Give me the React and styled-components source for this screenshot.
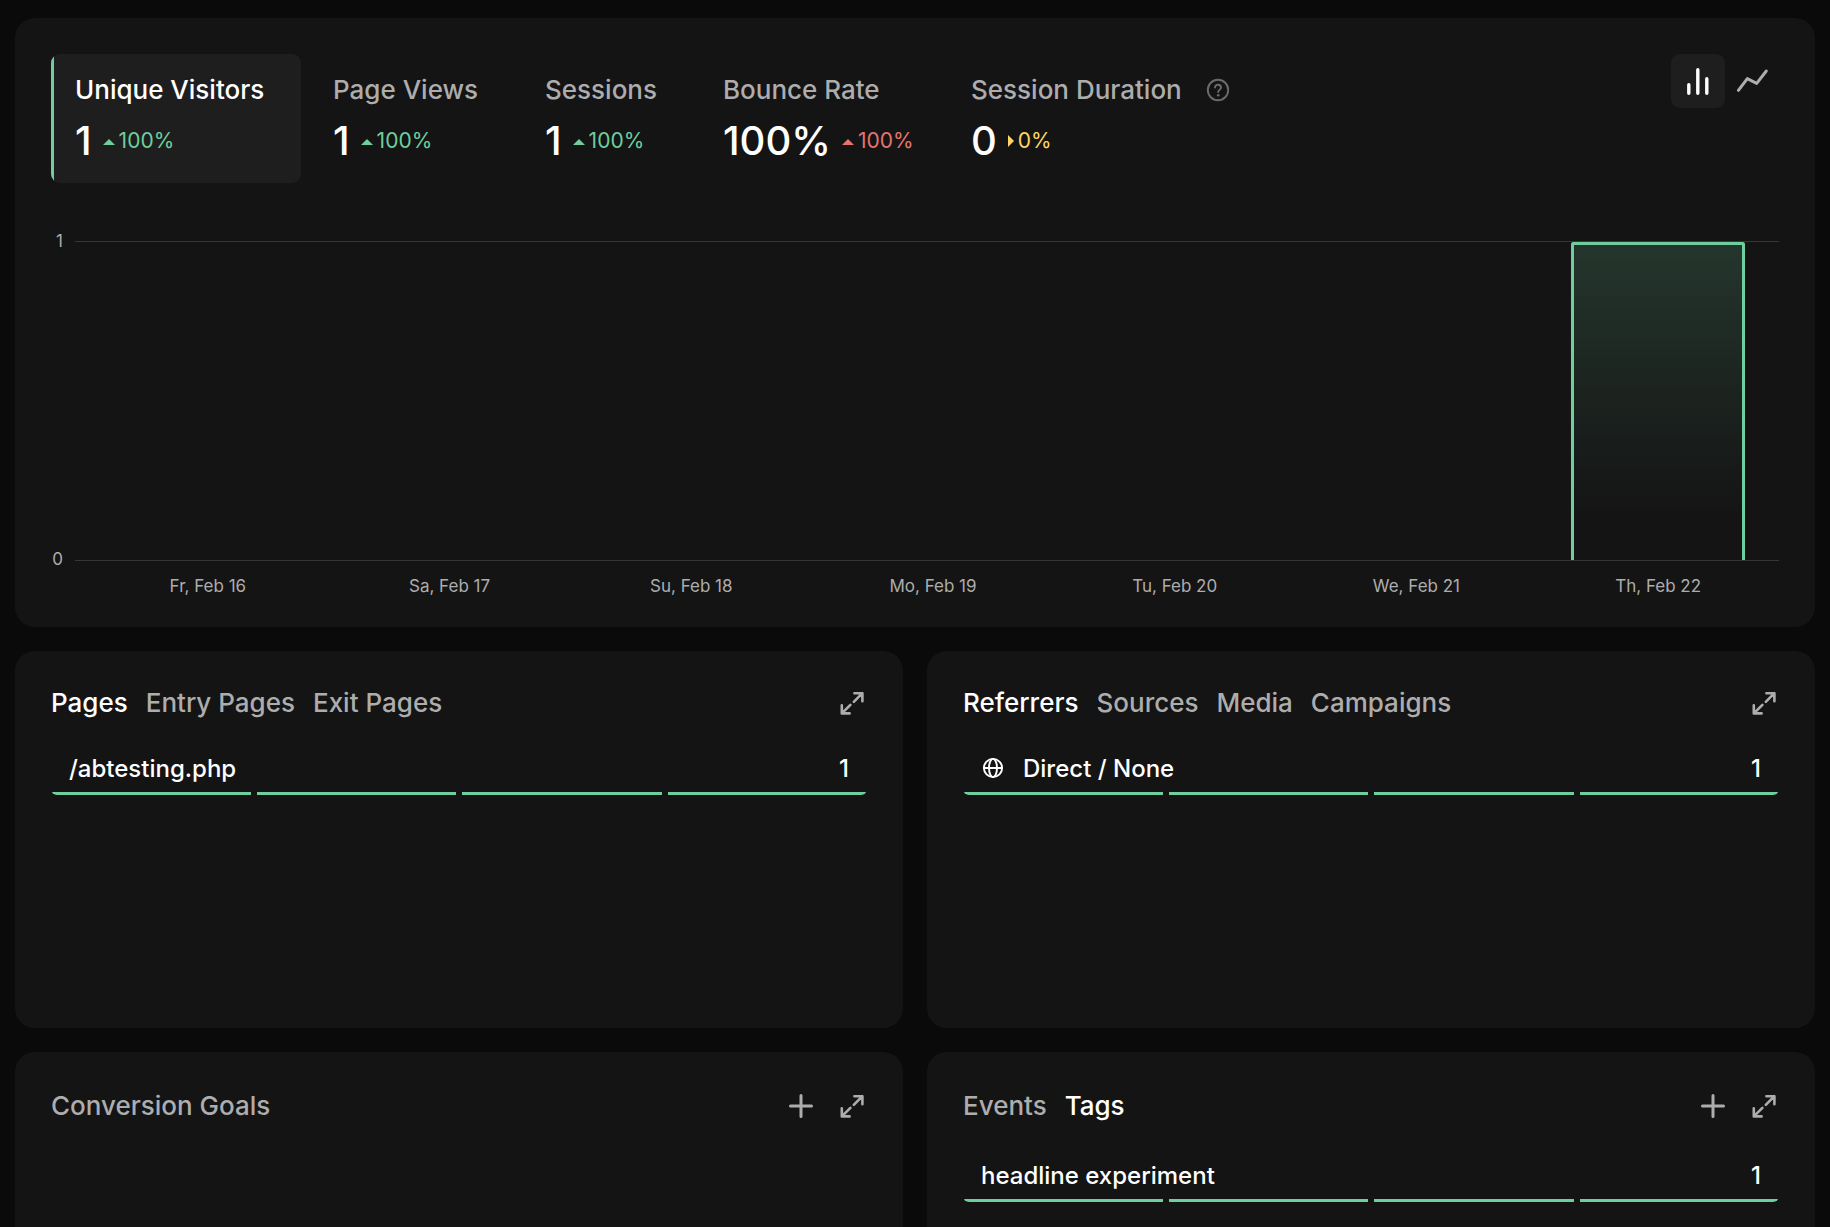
import React, { useState } from "react";
import styled, { createGlobalStyle } from "styled-components";

const color = {
  page: "#0a0a0a",
  card: "#141414",
  raised: "#1e1e1e",
  text: "#ffffff",
  muted: "#adadad",
  faint: "#6b6b6b",
  line: "#363636",
  green: "#6ece9d",
  red: "#e67370",
  yellow: "#ffd665",
};

const GlobalStyle = createGlobalStyle`
  *, *::before, *::after { box-sizing: border-box; }
  body {
    margin: 0;
    background: ${color.page};
    color: ${color.text};
    font-family: Inter, "Liberation Sans", sans-serif;
  }
  button {
    margin: 0;
    padding: 0;
    border: 0;
    background: none;
    color: inherit;
    font: inherit;
    text-align: left;
    cursor: pointer;
  }
  ul { margin: 0; padding: 0; list-style: none; }
`;

const Page = styled.main`
  display: flex;
  flex-direction: column;
  gap: 24px;
  height: 100vh;
  padding: 18px 15px;
  overflow-y: auto;
  scrollbar-width: none;
`;

const Card = styled.section`
  flex: none;
  padding: 36px 36px 27px;
  border-radius: 20px;
  background: ${color.card};
`;

const SummaryHeader = styled.header`
  display: flex;
  justify-content: space-between;
  align-items: flex-start;
`;

const Metrics = styled.div`
  display: flex;
  gap: 8px;
`;

const MetricTab = styled.button`
  display: flex;
  flex-direction: column;
  gap: 9px;
  min-width: ${(p) => p.$min}px;
  padding: 18px 24px;
  border-radius: 9px;
  background: ${(p) =>
    p.$active ? `linear-gradient(90deg, ${color.green} 3px, ${color.raised} 3px)` : "transparent"};
  color: ${(p) => (p.$active ? color.text : color.muted)};
`;

const MetricLabel = styled.span`
  display: flex;
  align-items: center;
  gap: 24px;
  font-size: 26px;
  font-weight: 500;
  line-height: 36px;
  white-space: nowrap;
`;

const MetricFigures = styled.span`
  display: flex;
  align-items: center;
  gap: 11px;
  line-height: 48px;
`;

const MetricValue = styled.span`
  color: ${color.text};
  font-size: 40px;
  font-weight: 500;
`;

const Change = styled.span`
  display: flex;
  align-items: center;
  gap: 4px;
  color: ${(p) => color[p.$tone]};
  font-size: 21px;
`;

const ChartTypes = styled.div`
  display: flex;
`;

const ChartTypeButton = styled.button`
  display: grid;
  place-items: center;
  width: 54px;
  height: 54px;
  border-radius: 9px;
  background: ${(p) => (p.$active ? color.raised : "transparent")};
  color: ${(p) => (p.$active ? color.text : color.muted)};
`;

const Chart = styled.div`
  display: grid;
  grid-template-columns: 12px minmax(0, 1fr);
  column-gap: 12px;
  margin-top: 58px;
  color: ${color.muted};
  font-size: 17px;
`;

const YAxis = styled.div`
  display: flex;
  flex-direction: column;
  justify-content: space-between;
  margin: -13px 0 -12px;
  line-height: 27px;
  text-align: right;
`;

const Columns = styled.div`
  display: grid;
  grid-template-columns: repeat(7, minmax(0, 1fr));
  padding-left: 12px;
`;

const Plot = styled(Columns)`
  height: 320px;
  border-top: 1px solid ${color.line};
  border-bottom: 1px solid ${color.line};
`;

const Slot = styled.div`
  display: flex;
  justify-content: center;
  align-items: flex-end;
`;

const Bar = styled.div`
  width: 72%;
  border: 3px solid ${color.green};
  border-bottom: 0;
  border-radius: 3px 3px 0 0;
  background: linear-gradient(rgba(110, 206, 157, 0.18), rgba(110, 206, 157, 0) 86%);
`;

const XAxis = styled(Columns)`
  grid-column: 2;
  padding-top: 12px;
  line-height: 27px;
  text-align: center;
`;

const PanelGrid = styled.div`
  display: grid;
  grid-template-columns: repeat(2, minmax(0, 1fr));
  gap: 24px;
`;

const Panel = styled(Card)`
  min-height: 377px;
`;

const PanelHeader = styled.header`
  display: flex;
  align-items: center;
  justify-content: space-between;
  height: ${(p) => (p.$tall ? 36 : 32)}px;
  margin-bottom: ${(p) => (p.$tall ? 27 : 25)}px;
`;

const Tabs = styled.div`
  display: flex;
  gap: 18px;
`;

const Tab = styled.button`
  color: ${(p) => (p.$active ? color.text : color.muted)};
  font-size: 26px;
  font-weight: 500;
  line-height: 32px;
  white-space: nowrap;
`;

const Actions = styled.div`
  display: flex;
  gap: 21px;
`;

const IconButton = styled.button`
  display: grid;
  place-items: center;
  width: 30px;
  height: 30px;
  color: ${color.muted};
`;

const Row = styled.li`
  overflow: hidden;
  border-radius: 6px;
`;

const RowContent = styled.div`
  display: flex;
  align-items: center;
  gap: 18px;
  height: 48px;
  padding: 0 18px;
  font-size: 24px;
  font-weight: 500;
`;

const RowValue = styled.span`
  margin-left: auto;
`;

const Track = styled.div`
  display: grid;
  grid-template-columns: repeat(4, minmax(0, 1fr));
  gap: 6px;
  height: 3px;
`;

const Segment = styled.span`
  background: ${color.green};
`;

const Icon = styled.svg.attrs({ fill: "none", stroke: "currentColor", "aria-hidden": true })`
  display: block;
  flex: none;
  stroke-linecap: round;
  stroke-linejoin: round;
`;

const UpCaret = () => (
  <Icon width="12" height="12" viewBox="0 0 12 12">
    <path d="M0 10L6 4L12 10Z" fill="currentColor" stroke="none" />
  </Icon>
);

const RightCaret = () => (
  <Icon width="6" height="12" viewBox="0 0 6 12">
    <path d="M0 0L6 6L0 12Z" fill="currentColor" stroke="none" />
  </Icon>
);

const HelpShape = styled(Icon)`
  color: ${color.faint};
`;

const HelpIcon = () => (
  <HelpShape width="24" height="24" viewBox="0 0 24 24" strokeWidth="1.9">
    <circle cx="12" cy="12" r="10.2" />
    <path d="M9 9.6C9 7.9 10.3 6.7 12 6.7S15 7.8 15 9.4C15 11.6 12.2 11.7 12.2 14.1" />
    <circle cx="12.2" cy="17.2" r="1.3" fill="currentColor" stroke="none" />
  </HelpShape>
);

const BarsIcon = () => (
  <Icon width="36" height="36" viewBox="0 0 36 36" strokeWidth="3.4">
    <path d="M8.8 21.7V30.2M17.8 6.7V30.2M26.8 15.7V30.2" />
  </Icon>
);

const LineIcon = () => (
  <Icon width="36" height="36" viewBox="0 0 36 36" strokeWidth="3">
    <path d="M4.4 27.3L13.3 15.6L22.7 20.4L32.3 8" />
  </Icon>
);

const ExpandIcon = () => (
  <Icon width="30" height="30" viewBox="0 0 30 30" strokeWidth="2.6">
    <path d="M17.4 5.2H25.4V13.2M25.4 5.2L16.8 13.8M12.6 25.4H4.8V17.4M4.8 25.4L13.4 16.8" />
  </Icon>
);

const PlusIcon = () => (
  <Icon width="30" height="30" viewBox="0 0 30 30" strokeWidth="3">
    <path d="M15 4.5V25.5M4.5 15H25.5" />
  </Icon>
);

const GlobeIcon = () => (
  <Icon width="24" height="24" viewBox="0 0 24 24" strokeWidth="1.9">
    <circle cx="12" cy="12" r="9.1" />
    <ellipse cx="12" cy="12" rx="4" ry="9.1" />
    <path d="M3 12H21" />
  </Icon>
);

const metrics = [
  { label: "Unique Visitors", value: "1", change: "100%", tone: "green", min: 250 },
  { label: "Page Views", value: "1", change: "100%", tone: "green", min: 204 },
  { label: "Sessions", value: "1", change: "100%", tone: "green", min: 170 },
  { label: "Bounce Rate", value: "100%", change: "100%", tone: "red", min: 240 },
  { label: "Session Duration", value: "0", change: "0%", tone: "yellow", min: 250, help: true },
];

const days = [
  { label: "Fr, Feb 16", visitors: 0 },
  { label: "Sa, Feb 17", visitors: 0 },
  { label: "Su, Feb 18", visitors: 0 },
  { label: "Mo, Feb 19", visitors: 0 },
  { label: "Tu, Feb 20", visitors: 0 },
  { label: "We, Feb 21", visitors: 0 },
  { label: "Th, Feb 22", visitors: 1 },
];

function Summary() {
  const [metric, setMetric] = useState(0);
  const [type, setType] = useState("bars");
  return (
    <Card>
      <SummaryHeader>
        <Metrics>
          {metrics.map((m, i) => (
            <MetricTab
              key={m.label}
              type="button"
              $active={i === metric}
              $min={m.min}
              aria-pressed={i === metric}
              onClick={() => setMetric(i)}
            >
              <MetricLabel>
                {m.label}
                {m.help && <HelpIcon />}
              </MetricLabel>
              <MetricFigures>
                <MetricValue>{m.value}</MetricValue>
                <Change $tone={m.tone}>
                  {m.tone === "yellow" ? <RightCaret /> : <UpCaret />}
                  {m.change}
                </Change>
              </MetricFigures>
            </MetricTab>
          ))}
        </Metrics>
        <ChartTypes>
          <ChartTypeButton type="button" aria-label="Bar chart" $active={type === "bars"} onClick={() => setType("bars")}>
            <BarsIcon />
          </ChartTypeButton>
          <ChartTypeButton type="button" aria-label="Line chart" $active={type === "line"} onClick={() => setType("line")}>
            <LineIcon />
          </ChartTypeButton>
        </ChartTypes>
      </SummaryHeader>
      <Chart>
        <YAxis>
          <span>1</span>
          <span>0</span>
        </YAxis>
        <Plot>
          {days.map((d) => (
            <Slot key={d.label}>
              {d.visitors > 0 && <Bar style={{ height: `${d.visitors * 100}%` }} />}
            </Slot>
          ))}
        </Plot>
        <XAxis>
          {days.map((d) => (
            <span key={d.label}>{d.label}</span>
          ))}
        </XAxis>
      </Chart>
    </Card>
  );
}

function StatsPanel({ tabs, initial = 0, rows = [], canAdd = false }) {
  const [active, setActive] = useState(initial);
  return (
    <Panel>
      <PanelHeader $tall={canAdd}>
        <Tabs>
          {tabs.map((t, i) => (
            <Tab key={t} type="button" $active={i === active} onClick={() => setActive(i)}>
              {t}
            </Tab>
          ))}
        </Tabs>
        <Actions>
          {canAdd && (
            <IconButton type="button" aria-label="Add">
              <PlusIcon />
            </IconButton>
          )}
          <IconButton type="button" aria-label="Expand">
            <ExpandIcon />
          </IconButton>
        </Actions>
      </PanelHeader>
      <ul>
        {rows.map((r) => (
          <Row key={r.name}>
            <RowContent>
              {r.globe && <GlobeIcon />}
              <span>{r.name}</span>
              <RowValue>{r.count}</RowValue>
            </RowContent>
            <Track>
              <Segment />
              <Segment />
              <Segment />
              <Segment />
            </Track>
          </Row>
        ))}
      </ul>
    </Panel>
  );
}

export default function App() {
  return (
    <>
      <GlobalStyle />
      <Page>
        <Summary />
        <PanelGrid>
          <StatsPanel tabs={["Pages", "Entry Pages", "Exit Pages"]} rows={[{ name: "/abtesting.php", count: 1 }]} />
          <StatsPanel
            tabs={["Referrers", "Sources", "Media", "Campaigns"]}
            rows={[{ name: "Direct / None", count: 1, globe: true }]}
          />
          <StatsPanel tabs={["Conversion Goals"]} initial={-1} canAdd />
          <StatsPanel tabs={["Events", "Tags"]} initial={1} rows={[{ name: "headline experiment", count: 1 }]} canAdd />
        </PanelGrid>
      </Page>
    </>
  );
}
